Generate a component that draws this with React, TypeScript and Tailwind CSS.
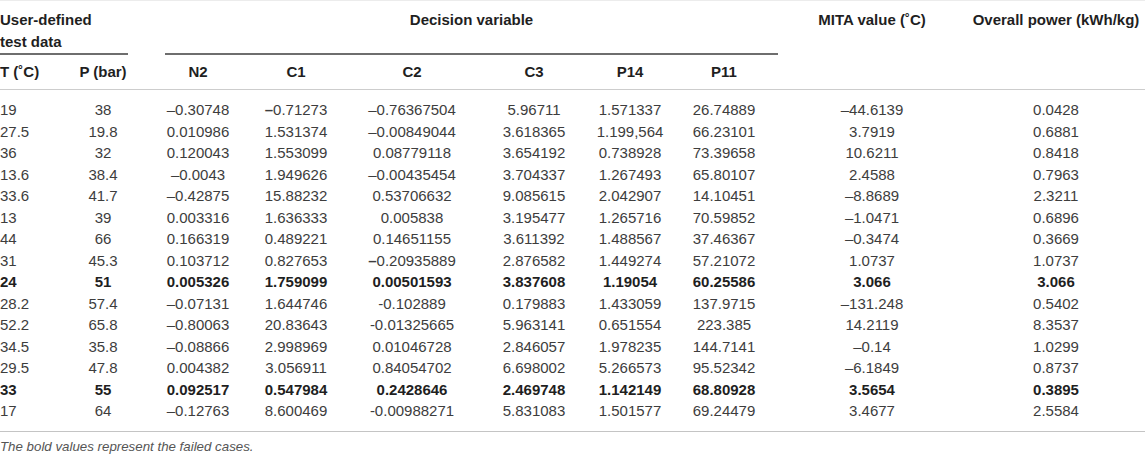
import React from 'react';

type Row = {
  t: string;
  p: string;
  vals: React.ReactNode[];
  mita: string;
  power: string;
  bold?: boolean;
};

const cols = 'grid grid-cols-[78px_50px_140px_56px_176px_68px_124px_64px_232px_136px]';

const Dash = () => <span className="font-bold">–</span>;

const rows: Row[] = [
  { t: '19', p: '38', vals: ['–0.30748', <><Dash />0.71273</>, '–0.76367504', '5.96711', '1.571337', '26.74889'], mita: '–44.6139', power: '0.0428' },
  { t: '27.5', p: '19.8', vals: ['0.010986', '1.531374', '–0.00849044', '3.618365', '1.199,564', '66.23101'], mita: '3.7919', power: '0.6881' },
  { t: '36', p: '32', vals: ['0.120043', '1.553099', '0.08779118', '3.654192', '0.738928', '73.39658'], mita: '10.6211', power: '0.8418' },
  { t: '13.6', p: '38.4', vals: ['–0.0043', '1.949626', '–0.00435454', '3.704337', '1.267493', '65.80107'], mita: '2.4588', power: '0.7963' },
  { t: '33.6', p: '41.7', vals: ['–0.42875', '15.88232', '0.53706632', '9.085615', '2.042907', '14.10451'], mita: '–8.8689', power: '2.3211' },
  { t: '13', p: '39', vals: ['0.003316', '1.636333', '0.005838', '3.195477', '1.265716', '70.59852'], mita: '–1.0471', power: '0.6896' },
  { t: '44', p: '66', vals: ['0.166319', '0.489221', '0.14651155', '3.611392', '1.488567', '37.46367'], mita: '–0.3474', power: '0.3669' },
  { t: '31', p: '45.3', vals: ['0.103712', '0.827653', <><Dash />0.20935889</>, '2.876582', '1.449274', '57.21072'], mita: '1.0737', power: '1.0737' },
  { t: '24', p: '51', vals: ['0.005326', '1.759099', '0.00501593', '3.837608', '1.19054', '60.25586'], mita: '3.066', power: '3.066', bold: true },
  { t: '28.2', p: '57.4', vals: ['–0.07131', '1.644746', '-0.102889', '0.179883', '1.433059', '137.9715'], mita: '–131.248', power: '0.5402' },
  { t: '52.2', p: '65.8', vals: ['–0.80063', '20.83643', '-0.01325665', '5.963141', '0.651554', '223.385'], mita: '14.2119', power: '8.3537' },
  { t: '34.5', p: '35.8', vals: ['–0.08866', '2.998969', '0.01046728', '2.846057', '1.978235', '144.7141'], mita: '–0.14', power: '1.0299' },
  { t: '29.5', p: '47.8', vals: ['0.004382', '3.056911', '0.84054702', '6.698002', '5.266573', '95.52342'], mita: '–6.1849', power: '0.8737' },
  { t: '33', p: '55', vals: ['0.092517', '0.547984', '0.2428646', '2.469748', '1.142149', '68.80928'], mita: '3.5654', power: '0.3895', bold: true },
  { t: '17', p: '64', vals: ['–0.12763', '8.600469', '-0.00988271', '5.831083', '1.501577', '69.24479'], mita: '3.4677', power: '2.5584' },
];

const Cell = ({ children }: { children: React.ReactNode }) => (
  <div className="flex justify-center whitespace-nowrap">{children}</div>
);

export default function App() {
  return (
    <div className="w-[1145px] h-[454px] bg-white border-t border-[#ececec] font-['Liberation_Sans',Arial,sans-serif] text-[15px]">
      {/* header */}
      <div className="border-b border-[#cdcdcd] text-[#1f1f1f] font-bold">
        <div className={`${cols} pt-[8px] leading-[22px]`}>
          <div className="col-span-2 border-b-2 border-[#6e6e6e]">
            User-defined
            <br />
            test data
          </div>
          <div className="col-span-6 ml-[37px] mr-[-22px] border-b-2 border-[#6e6e6e] text-center">
            Decision variable
          </div>
          <Cell>MITA value (˚C)</Cell>
          <Cell>Overall power (kWh/kg)</Cell>
        </div>
        <div className={`${cols} pt-[6px] pb-[6px] leading-[22px]`}>
          <div className="whitespace-nowrap">T (˚C)</div>
          <Cell>P (bar)</Cell>
          <Cell>N2</Cell>
          <Cell>C1</Cell>
          <Cell>C2</Cell>
          <Cell>C3</Cell>
          <Cell>P14</Cell>
          <Cell>P11</Cell>
          <div />
          <div />
        </div>
      </div>

      {/* body */}
      <div className="py-[9px] border-b border-[#c4c4c4]">
        {rows.map((r, i) => (
          <div
            key={i}
            className={`${cols} h-[21.5px] leading-[21.5px] ${r.bold ? 'font-bold text-[#1f1f1f]' : 'text-[#3d3d3d]'}`}
          >
            <div className="whitespace-nowrap">{r.t}</div>
            <Cell>{r.p}</Cell>
            {r.vals.map((v, j) => (
              <Cell key={j}>{v}</Cell>
            ))}
            <Cell>{r.mita}</Cell>
            <Cell>{r.power}</Cell>
          </div>
        ))}
      </div>

      <p className="mt-[7px] text-[13.3px] leading-[16px] italic text-[#555555]">
        The bold values represent the failed cases.
      </p>
    </div>
  );
}
